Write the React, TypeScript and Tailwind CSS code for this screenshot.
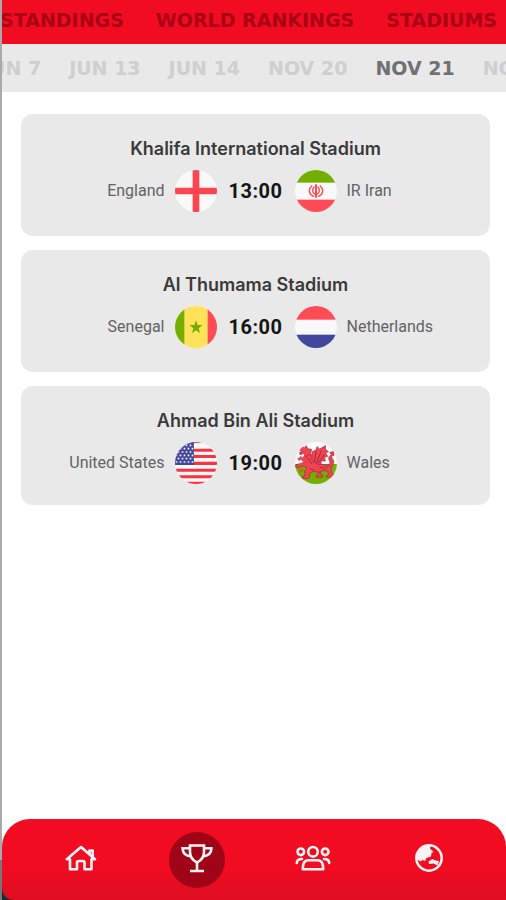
import type { ReactNode } from "react";

type Match = {
  stadium: string;
  home: string;
  homeFlag: ReactNode;
  time: string;
  away: string;
  awayFlag: ReactNode;
};

const TABS = ["STANDINGS", "WORLD RANKINGS", "STADIUMS"];

const DATES = ["JUN 7", "JUN 13", "JUN 14", "NOV 20", "NOV 21", "NOV 22"];

const STAR_ROWS = [7, 17, 27, 37, 47, 57];

const MATCHES: Match[] = [
  {
    stadium: "Khalifa International Stadium",
    home: "England",
    homeFlag: <England />,
    time: "13:00",
    away: "IR Iran",
    awayFlag: <Iran />,
  },
  {
    stadium: "Al Thumama Stadium",
    home: "Senegal",
    homeFlag: <Senegal />,
    time: "16:00",
    away: "Netherlands",
    awayFlag: <Netherlands />,
  },
  {
    stadium: "Ahmad Bin Ali Stadium",
    home: "United States",
    homeFlag: <UnitedStates />,
    time: "19:00",
    away: "Wales",
    awayFlag: <Wales />,
  },
];

function Flag({ children }: { children: ReactNode }) {
  return (
    <svg viewBox="0 0 126 126" className="size-[42px] shrink-0 rounded-full" aria-hidden="true">
      <rect width="126" height="126" fill="#f9f9f9" />
      {children}
    </svg>
  );
}

function England() {
  return (
    <Flag>
      <path d="M53 0h20v126H53z M0 53h126v20H0z" fill="#ff4451" />
    </Flag>
  );
}

function Iran() {
  return (
    <Flag>
      <rect width="126" height="38" fill="#73af00" />
      <rect y="89" width="126" height="37" fill="#ff4b55" />
      <g fill="none" stroke="#ff4b55" strokeWidth="4" strokeLinecap="round">
        <path d="M63 45v36" strokeWidth="6" />
        <path d="M50 48c-11 10-9 26 6 31" />
        <path d="M76 48c11 10 9 26-6 31" />
        <path d="M57 51c-6 8-5 16 2 21" />
        <path d="M69 51c6 8 5 16-2 21" />
      </g>
    </Flag>
  );
}

function Senegal() {
  return (
    <Flag>
      <rect width="126" height="126" fill="#ffe15a" />
      <rect width="28" height="126" fill="#73af00" />
      <rect x="98" width="28" height="126" fill="#ff4b55" />
      <path d="M63 43l5 14h15L71 67l4 15-12-9-12 9 4-15-12-10h15z" fill="#73af00" />
    </Flag>
  );
}

function Netherlands() {
  return (
    <Flag>
      <rect width="126" height="41" fill="#ff4b55" />
      <rect y="86" width="126" height="40" fill="#41479b" />
    </Flag>
  );
}

function UnitedStates() {
  return (
    <Flag>
      <path
        d="M0 0h126v3H0z M0 20h126v9H0z M0 39h126v9H0z M0 59h126v10H0z M0 80h126v9H0z M0 100h126v9H0z M0 119h126v7H0z"
        fill="#ff3040"
      />
      <rect width="57" height="69" fill="#41479b" />
      {STAR_ROWS.map((y, row) => (
        <path
          key={y}
          d={`M${row % 2 ? 2 : 8} ${y + 3}H57`}
          stroke="#f5f5f5"
          strokeWidth="5"
          strokeDasharray="5 7"
        />
      ))}
    </Flag>
  );
}

function Wales() {
  return (
    <Flag>
      <rect y="66" width="126" height="60" fill="#73af00" />
      <g fill="#f04452" stroke="#9c2c40" strokeWidth="2" strokeLinejoin="round">
        {/* tail */}
        <path d="M92 72c12-2 15-9 11-16-4-8-1-16 8-18l-7-6 12-4 1 12c-9 1-8 7-3 13 6 9 0 22-15 26z" />
        {/* hind legs */}
        <path d="M68 76l28-8c12 3 17 12 12 22l12 11-7 5-19-1 2-6 6-3-6-9-17-2-4 10 9 6-3 6-18-2 2-7 5-3z" />
        {/* body and forelegs */}
        <path d="M34 34l16 4 14 26 26 4 6 10-18 12-26-1-9 7 2 9-6 5-17-1 1-6 8-3-3-12 8-10-12-6-13 5-10-3 2-6 11-3 14-4-9-8z" />
        {/* head */}
        <path d="M8 22l13-8 7 3 6-6 4 9 12 2-4 16-14 6-5-10-12 4-1-7 9-3z" />
        {/* wing */}
        <path d="M50 54l2-25 11-5 3-10 8 7 18-10-1 10 9 8-8 4 6 10-10 3 3 11-12-1-2 12-12-3z" />
      </g>
      <path
        d="M58 60l6-34M65 62l14-36M70 63l18-25M38 48l12 18M44 80l14 4M74 76l14 2"
        fill="none"
        stroke="#a8293c"
        strokeWidth="3"
      />
      <path d="M6 52l12-10 5 6-9 8z M14 84l12-5-3 9-9 4z" fill="#f04452" />
    </Flag>
  );
}

function HomeIcon() {
  return (
    <svg viewBox="0 0 32 32" className="size-8" fill="none" stroke="#fff4f4" strokeWidth="2.6" strokeLinejoin="round" strokeLinecap="round">
      <path d="M1.800 17.200H5V27.200h7V20.500a1.500 1.500 0 0 1 1.500-1.500h4.500a1.500 1.500 0 0 1 1.500 1.500V27.200h7V17.200h3.500L16 5z" />
      <path d="M24.500 11.500V8.500h3.200V15" />
    </svg>
  );
}

function TrophyIcon() {
  return (
    <svg viewBox="0 0 32 32" className="size-8" fill="none" stroke="#fff4f4" strokeWidth="2.600">
      <path d="M9 3.500h14V10c0 5-3 8.500-7 10.500-4-2-7-5.500-7-10.500z" />
      <path d="M9 6.300H1.600C1.600 11.500 4.500 14 10.500 14.500M23 6.300h7.400c0 5.200-3 7.700-8.900 8.200" />
      <path d="M16 20.500V29M9 29h14" />
    </svg>
  );
}

function TeamIcon() {
  return (
    <svg viewBox="0 0 36 32" className="h-8 w-9" fill="none" stroke="#fff4f4" strokeWidth="2.600" strokeLinecap="round">
      <circle cx="18" cy="9.800" r="4.800" />
      <circle cx="5.800" cy="9.800" r="3.300" />
      <circle cx="30.200" cy="9.800" r="3.300" />
      <path d="M13 18.200h10c3.500 0 5.200 2.800 5.200 9H7.800c0-6.200 1.700-9 5.200-9z" strokeLinejoin="round" />
      <path d="M1.800 21c0-2.800 1.500-4 5.200-4M34.200 21c0-2.800-1.500-4-5.200-4" />
    </svg>
  );
}

function GlobeIcon() {
  return (
    <svg viewBox="0 0 32 32" className="size-8">
      <circle cx="16" cy="16" r="12.700" fill="none" stroke="#fff4f4" strokeWidth="2.500" />
      <path
        d="M3.500 17C3 8 9 3 17.500 3.500l-.5 3 3.500 3.500-2 1-.5 3.500-4.500 1.500-1.500 3-2.500-1-2 1.500z"
        fill="#fff4f4"
      />
      <path d="M15.500 19.500l4-2.500 3 1.500 3.500.5-1.500 4.500-4-2-4.500.5z" fill="#fff4f4" />
    </svg>
  );
}

const NAV = [
  { label: "Home", icon: <HomeIcon /> },
  { label: "Matches", icon: <TrophyIcon />, active: true },
  { label: "Teams", icon: <TeamIcon /> },
  { label: "World", icon: <GlobeIcon /> },
];

function MatchCard({ match }: { match: Match }) {
  return (
    <article className="rounded-xl bg-[#e9e9e9] px-4 pt-[23px] pb-6 last:pb-[21px]">
      <h2 className="text-center font-[Inter,sans-serif] text-lg leading-6 font-semibold text-[#3a3a3a]">
        {match.stadium}
      </h2>
      <div className="mt-[9px] grid grid-cols-[1fr_auto_1fr] items-center gap-[10px]">
        <span className="text-right text-base text-[#636363]">{match.home}</span>
        <div className="flex items-center">
          {match.homeFlag}
          <span className="w-[78px] text-center text-xl font-bold tracking-wide text-[#151515]">
            {match.time}
          </span>
          {match.awayFlag}
        </div>
        <span className="text-base text-[#636363]">{match.away}</span>
      </div>
    </article>
  );
}

function App() {
  return (
    <div className="flex min-h-screen bg-white font-[Roboto,sans-serif]">
      <div className="flex w-[2px] shrink-0 flex-col bg-[#aaaaaa]">
        <div className="mt-auto h-10 bg-[#777777]" />
      </div>
      <div className="flex min-w-0 flex-1 flex-col">
        <header>
          <nav className="flex h-11 items-center justify-end gap-8 overflow-hidden bg-[#f20c22] pr-[9px] pb-1 font-['DejaVu_Sans',sans-serif] text-[19px] font-bold whitespace-nowrap text-[#a90315]">
            {TABS.map((tab) => (
              <a key={tab} href="#" className="shrink-0">
                {tab}
              </a>
            ))}
          </nav>
          <div className="h-12 overflow-hidden bg-[#e9e9e9]">
            <div className="-mr-14 flex h-full items-center justify-end gap-7 font-['DejaVu_Sans',sans-serif] text-[19px] font-bold whitespace-nowrap">
              {DATES.map((date) => (
                <button
                  key={date}
                  type="button"
                  className={date === "NOV 21" ? "shrink-0 text-[#717171]" : "shrink-0 text-[#cfcfcf]"}
                >
                  {date}
                </button>
              ))}
            </div>
          </div>
        </header>

        <main className="flex flex-1 flex-col gap-[14px] pt-[22px] pr-4 pb-6 pl-[19px]">
          {MATCHES.map((match) => (
            <MatchCard key={match.stadium} match={match} />
          ))}
        </main>

        <div className="bg-[linear-gradient(to_bottom,#ffffff_85%,#16302f_86%)]">
          <nav className="grid h-[81px] grid-cols-4 items-center rounded-t-[28px] rounded-bl-xl bg-linear-to-b from-[#f20c22] from-60% to-[#dd0d22] pr-[19px] pl-[21px]">
            {NAV.map((item) => (
              <button
                key={item.label}
                type="button"
                aria-label={item.label}
                className={
                  item.active
                    ? "flex size-14 items-center justify-center justify-self-center rounded-full bg-[#a00417] pb-1"
                    : "flex size-14 items-center justify-center justify-self-center pb-1"
                }
              >
                {item.icon}
              </button>
            ))}
          </nav>
        </div>
      </div>
    </div>
  );
}

export default App;
